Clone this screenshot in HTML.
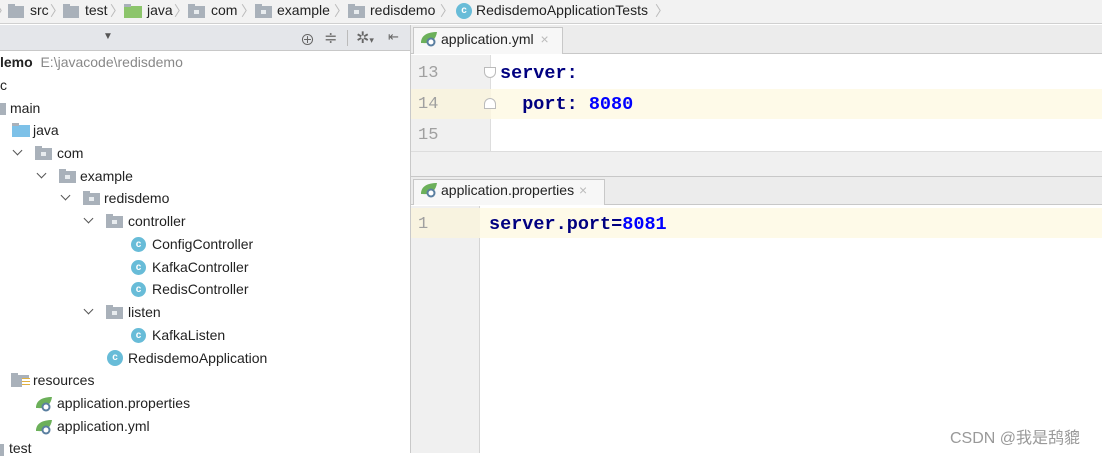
<!DOCTYPE html>
<html><head><meta charset="utf-8"><style>
*{margin:0;padding:0;box-sizing:border-box}
body{width:1102px;height:453px;overflow:hidden;background:#fff;font-family:"Liberation Sans","Noto Sans CJK SC",sans-serif;font-size:14px;color:#222;position:relative}
.a{position:absolute;white-space:nowrap}
.t{position:absolute;white-space:nowrap;line-height:18px;height:18px}
.fold{position:absolute;width:17px;height:12px;background:#a9b1ba}
.fold::before{content:"";position:absolute;left:0;top:-2px;width:7px;height:3px;background:#a9b1ba}
.fold.p::after{content:"";position:absolute;left:6px;top:4px;width:5px;height:4px;background:#e8ecef}
.cls{position:absolute;width:15px;height:15px;border-radius:50%;background:#68bcd8;color:#fff;font-size:10px;font-weight:bold;text-align:center;line-height:15px}
.chev{position:absolute;width:7px;height:7px;border-right:1.6px solid #555;border-bottom:1.6px solid #555;transform:rotate(45deg)}
.leaf{position:absolute;width:18px;height:16px}
.mono{font-family:"Liberation Mono",monospace;font-weight:bold}
.sep{color:#bbb;margin:0 5px}
</style></head><body>
<!-- breadcrumb -->
<div class="a" style="left:0;top:0;width:1102px;height:24px;background:#f2f2f2;border-bottom:1px solid #d0d0d0"></div>
<div class="a" style="left:0;top:2px;font-size:14px;line-height:18px;color:#222">
<span class="sep" style="margin-left:-4px">〉</span></div>
<div class="fold" style="left:8px;top:6px;width:16px"></div><div class="t" style="left:30px;top:1px">src</div>
<div class="a" style="left:50px;top:1px;color:#bbb">〉</div>
<div class="fold" style="left:63px;top:6px;width:16px"></div><div class="t" style="left:85px;top:1px">test</div>
<div class="a" style="left:110px;top:1px;color:#bbb">〉</div>
<div class="fold" style="left:124px;top:6px;width:18px;background:#8cc56b"></div><div class="t" style="left:147px;top:1px">java</div>
<div class="a" style="left:174px;top:1px;color:#bbb">〉</div>
<div class="fold p" style="left:188px;top:6px"></div><div class="t" style="left:211px;top:1px">com</div>
<div class="a" style="left:241px;top:1px;color:#bbb">〉</div>
<div class="fold p" style="left:255px;top:6px"></div><div class="t" style="left:277px;top:1px">example</div>
<div class="a" style="left:334px;top:1px;color:#bbb">〉</div>
<div class="fold p" style="left:348px;top:6px"></div><div class="t" style="left:370px;top:1px">redisdemo</div>
<div class="a" style="left:440px;top:1px;color:#bbb">〉</div>
<div class="cls" style="left:456px;top:3px;width:16px;height:16px;line-height:16px">c</div>
<div class="t" style="left:476px;top:1px">RedisdemoApplicationTests</div>
<div class="a" style="left:655px;top:1px;color:#bbb">〉</div>

<!-- left panel header -->
<div class="a" style="left:0;top:25px;width:411px;height:26px;background:#e4e6ea;border-bottom:1px solid #c8c8c8"></div>
<div class="a" style="left:103px;top:31px;font-size:10px;color:#555">▼</div>
<div class="a" style="left:300px;top:29px;font-size:15px;color:#666">⊕</div>
<div class="a" style="left:324px;top:28px;font-size:16px;color:#777">≑</div>
<div class="a" style="left:347px;top:30px;width:1px;height:16px;background:#bbb"></div>
<div class="a" style="left:356px;top:28px;font-size:16px;color:#666">✲<span style="font-size:9px">▾</span></div>
<div class="a" style="left:388px;top:29px;font-size:13px;color:#666">⇤</div>
<div class="a" style="left:410px;top:25px;width:1px;height:428px;background:#c9c9c9"></div>

<!-- tree -->
<div class="t" style="left:0;top:53px"><b>lemo</b>&nbsp; <span style="color:#888">E:\javacode\redisdemo</span></div>
<div class="t" style="left:0;top:76px">c</div>
<div class="fold" style="left:-10px;top:103px;width:16px"></div><div class="t" style="left:10px;top:99px">main</div>
<div class="fold" style="left:12px;top:125px;width:18px;background:#7dc1e8"></div><div class="t" style="left:33px;top:121px">java</div>
<div class="chev" style="left:14px;top:147px"></div><div class="fold p" style="left:35px;top:148px"></div><div class="t" style="left:57px;top:144px">com</div>
<div class="chev" style="left:38px;top:170px"></div><div class="fold p" style="left:59px;top:171px"></div><div class="t" style="left:80px;top:167px">example</div>
<div class="chev" style="left:62px;top:192px"></div><div class="fold p" style="left:83px;top:193px"></div><div class="t" style="left:104px;top:189px">redisdemo</div>
<div class="chev" style="left:85px;top:215px"></div><div class="fold p" style="left:106px;top:216px"></div><div class="t" style="left:128px;top:212px">controller</div>
<div class="cls" style="left:131px;top:237px">c</div><div class="t" style="left:152px;top:235px">ConfigController</div>
<div class="cls" style="left:131px;top:260px">c</div><div class="t" style="left:152px;top:258px">KafkaController</div>
<div class="cls" style="left:131px;top:282px">c</div><div class="t" style="left:152px;top:280px">RedisController</div>
<div class="chev" style="left:85px;top:306px"></div><div class="fold p" style="left:106px;top:307px"></div><div class="t" style="left:128px;top:303px">listen</div>
<div class="cls" style="left:131px;top:328px">c</div><div class="t" style="left:152px;top:326px">KafkaListen</div>
<div class="cls" style="left:107px;top:350px;width:16px;height:16px;line-height:16px">c</div><div class="t" style="left:128px;top:349px">RedisdemoApplication</div>
<div class="fold" style="left:11px;top:375px;width:18px"></div><div class="a" style="left:22px;top:378px;width:8px;height:9px;background:repeating-linear-gradient(#e0b040 0 1px,#fff 1px 3px)"></div><div class="t" style="left:33px;top:371px">resources</div>
<svg class="leaf" style="left:35px;top:396px" viewBox="0 0 18 16"><path d="M1 12C1 4 8 1 17 1C16 9 10 13 3 12Z" fill="#6cb05a"/><circle cx="11" cy="11" r="4.5" fill="#5a7fa0"/><circle cx="11" cy="11" r="2.5" fill="#fff"/></svg><div class="t" style="left:57px;top:394px">application.properties</div>
<svg class="leaf" style="left:35px;top:419px" viewBox="0 0 18 16"><path d="M1 12C1 4 8 1 17 1C16 9 10 13 3 12Z" fill="#6cb05a"/><circle cx="11" cy="11" r="4.5" fill="#5a7fa0"/><circle cx="11" cy="11" r="2.5" fill="#fff"/></svg><div class="t" style="left:57px;top:417px">application.yml</div>
<div class="fold" style="left:-12px;top:444px;width:16px"></div><div class="t" style="left:9px;top:439px">test</div>

<!-- editor 1 -->
<div class="a" style="left:411px;top:25px;width:691px;height:29px;background:#ececec;border-bottom:1px solid #c8c8c8"></div>
<div class="a" style="left:413px;top:27px;width:150px;height:27px;background:#f7f7f7;border:1px solid #c8c8c8;border-bottom:none"></div>
<svg class="leaf" style="left:420px;top:31px" viewBox="0 0 18 16"><path d="M1 12C1 4 8 1 17 1C16 9 10 13 3 12Z" fill="#6cb05a"/><circle cx="11" cy="11" r="4.5" fill="#5a7fa0"/><circle cx="11" cy="11" r="2.5" fill="#fff"/></svg>
<div class="t" style="left:441px;top:30px">application.yml <span style="color:#bbb;margin-left:3px">×</span></div>
<div class="a" style="left:411px;top:55px;width:80px;height:96px;background:#f0f0f0;border-right:1px solid #ddd"></div>
<div class="a" style="left:411px;top:89px;width:691px;height:30px;background:#fefae8"></div>
<div class="a" style="left:411px;top:89px;width:80px;height:30px;background:#f8f3e0"></div>
<div class="a mono" style="left:418px;top:58px;font-size:17px;line-height:31px;color:#a0a0a0;font-weight:normal">13<br>14<br>15</div>
<div class="a" style="left:484px;top:67px;width:12px;height:11px;border:1px solid #bbb;background:#fff;border-radius:0 0 6px 6px"></div>
<div class="a" style="left:484px;top:98px;width:12px;height:11px;border:1px solid #bbb;background:#fff;border-radius:6px 6px 0 0"></div>
<div class="a mono" style="left:500px;top:58px;font-size:18.5px;line-height:31px;color:#000080">server:<br>&nbsp;&nbsp;port: <span style="color:#0000ff">8080</span></div>
<div class="a" style="left:411px;top:151px;width:691px;height:26px;background:#f0f0f0;border-top:1px solid #ddd;border-bottom:1px solid #c8c8c8"></div>

<!-- editor 2 -->
<div class="a" style="left:411px;top:177px;width:691px;height:28px;background:#ececec;border-bottom:1px solid #c8c8c8"></div>
<div class="a" style="left:413px;top:179px;width:192px;height:26px;background:#f7f7f7;border:1px solid #c8c8c8;border-bottom:none"></div>
<svg class="leaf" style="left:420px;top:182px" viewBox="0 0 18 16"><path d="M1 12C1 4 8 1 17 1C16 9 10 13 3 12Z" fill="#6cb05a"/><circle cx="11" cy="11" r="4.5" fill="#5a7fa0"/><circle cx="11" cy="11" r="2.5" fill="#fff"/></svg>
<div class="t" style="left:441px;top:181px">application.properties <span style="color:#bbb;margin-left:1px">×</span></div>
<div class="a" style="left:411px;top:206px;width:69px;height:247px;background:#f0f0f0;border-right:1px solid #d4d4d4"></div>
<div class="a" style="left:411px;top:208px;width:691px;height:30px;background:#fefae8"></div>
<div class="a" style="left:411px;top:208px;width:69px;height:30px;background:#f8f3e0"></div>
<div class="a mono" style="left:418px;top:210px;font-size:17px;line-height:30px;color:#a0a0a0;font-weight:normal">1</div>
<div class="a mono" style="left:489px;top:210px;font-size:18.5px;line-height:30px;color:#000080">server.port=<span style="color:#0000ff">8081</span></div>

<div class="a" style="left:950px;top:424px;font-size:16px;color:#999">CSDN @我是鸹貔</div>
</body></html>
